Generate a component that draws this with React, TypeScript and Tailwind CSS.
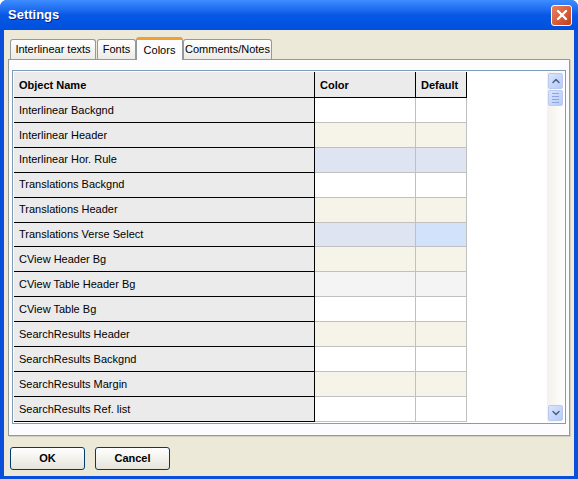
import { X, ChevronUp, ChevronDown } from "lucide-react";

// Filas de la tabla de colores
interface FilaColor {
  nombre: string;
  color: string;
  defecto: string;
}

const filas: FilaColor[] = [
  { nombre: "Interlinear Backgnd", color: "bg-white", defecto: "bg-white" },
  { nombre: "Interlinear Header", color: "bg-[#F6F3E8]", defecto: "bg-[#F6F3E8]" },
  { nombre: "Interlinear Hor. Rule", color: "bg-[#DFE4F3]", defecto: "bg-[#DFE4F3]" },
  { nombre: "Translations Backgnd", color: "bg-white", defecto: "bg-white" },
  { nombre: "Translations Header", color: "bg-[#F6F3E8]", defecto: "bg-[#F6F3E8]" },
  { nombre: "Translations Verse Select", color: "bg-[#DFE4F3]", defecto: "bg-[#D3E2FB]" },
  { nombre: "CView Header Bg", color: "bg-[#F6F3E8]", defecto: "bg-[#F6F3E8]" },
  { nombre: "CView Table Header Bg", color: "bg-[#F4F4F4]", defecto: "bg-[#F4F4F4]" },
  { nombre: "CView Table Bg", color: "bg-white", defecto: "bg-white" },
  { nombre: "SearchResults Header", color: "bg-[#F6F3E8]", defecto: "bg-[#F6F3E8]" },
  { nombre: "SearchResults Backgnd", color: "bg-white", defecto: "bg-white" },
  { nombre: "SearchResults Margin", color: "bg-[#F6F3E8]", defecto: "bg-[#F6F3E8]" },
  { nombre: "SearchResults Ref. list", color: "bg-white", defecto: "bg-white" },
];

function Pestana({ texto, ancho, activa }: { texto: string; ancho: string; activa?: boolean }) {
  if (activa) {
    return (
      <div
        className={`${ancho} h-[23px] -mb-[1px] relative z-10 flex items-center justify-center rounded-t-[3px] border-x border-[#919B9C] bg-[#FCFCFE] border-t-[3px] border-t-[#F0A030] text-[11px] text-black`}
      >
        {texto}
      </div>
    );
  }
  return (
    <div
      className={`${ancho} h-[20px] flex items-center justify-center rounded-t-[3px] border border-b-0 border-[#919B9C] bg-gradient-to-b from-white to-[#ECEBE5] text-[11px] text-black`}
    >
      {texto}
    </div>
  );
}

function BotonScroll({ children }: { children: React.ReactNode }) {
  return (
    <div className="w-[15px] h-[16px] rounded-[2px] border border-[#B9CBF3] bg-gradient-to-br from-[#D9E5FD] to-[#B7CBF8] flex items-center justify-center text-[#4D6185]">
      {children}
    </div>
  );
}

export default function App() {
  return (
    <div
      className="w-[578px] h-[479px] flex flex-col bg-[#0A4FDB] rounded-t-[7px] overflow-hidden"
      style={{ fontFamily: '"Liberation Sans", Arial, sans-serif' }}
    >
      {/* Barra de título */}
      <div className="h-[30px] flex items-center justify-between pl-[8px] pr-[6px] bg-gradient-to-b from-[#3E8DFF] via-[#0858E6] to-[#0050DD]">
        <span className="text-white font-bold text-[13px] [text-shadow:1px_1px_0_#0A1E8C]">Settings</span>
        <div className="w-[21px] h-[21px] rounded-[3px] border border-white bg-gradient-to-br from-[#E8815E] to-[#C83A15] flex items-center justify-center">
          <X size={16} strokeWidth={3.5} className="text-white" />
        </div>
      </div>

      {/* Área cliente */}
      <div className="flex-1 mx-[4px] mb-[3px] bg-[#ECE9D8] flex flex-col px-[4px] pt-[7px]">
        {/* Pestañas */}
        <div className="h-[22px] flex items-end pl-[2px]">
          <Pestana texto="Interlinear texts" ancho="w-[86px]" />
          <div className="w-[1px]" />
          <Pestana texto="Fonts" ancho="w-[39px]" />
          <Pestana texto="Colors" ancho="w-[47px]" activa />
          <Pestana texto="Comments/Notes" ancho="w-[89px]" />
        </div>

        {/* Panel */}
        <div className="h-[377px] border border-[#919B9C] bg-[#FCFCFE] pt-[10px] px-[3px] [box-shadow:1px_1px_0_#D0CEBF]">
          <div className="h-[354px] border border-[#7F9DB9] bg-white flex p-[1px]">
            {/* Tabla */}
            <div className="flex-1 flex flex-col text-[11px] text-black">
              <div className="h-[26px] flex font-bold">
                <div className="w-[301px] bg-[#EBEBEB] border-r border-b border-black flex items-center pl-[5px] pt-[1px]">
                  Object Name
                </div>
                <div className="w-[101px] bg-[#EBEBEB] border-r border-b border-black flex items-center pl-[5px] pt-[1px]">
                  Color
                </div>
                <div className="w-[51px] bg-[#EBEBEB] border-r border-b border-black flex items-center pl-[5px] pt-[1px]">
                  Default
                </div>
              </div>
              {filas.map((f) => (
                <div key={f.nombre} className="h-[25px] flex">
                  <div className="w-[301px] border-r border-b border-black bg-[#EBEBEB] flex items-center pl-[5px]">
                    {f.nombre}
                  </div>
                  <div className={`w-[101px] border-r border-b border-[#C0C0C0] ${f.color}`} />
                  <div className={`w-[51px] border-r border-b border-[#C0C0C0] ${f.defecto}`} />
                </div>
              ))}
            </div>

            {/* Barra de desplazamiento */}
            <div className="w-[17px] flex flex-col items-center justify-between py-[1px] bg-gradient-to-r from-[#F3F1EC] to-[#FEFEFB]">
              <div className="flex flex-col items-center gap-[1px]">
                <BotonScroll>
                  <ChevronUp size={12} strokeWidth={3} />
                </BotonScroll>
                <BotonScroll>
                  <div className="flex flex-col gap-[2px]">
                    <div className="w-[7px] h-[1px] bg-[#8EA5E0]" />
                    <div className="w-[7px] h-[1px] bg-[#8EA5E0]" />
                    <div className="w-[7px] h-[1px] bg-[#8EA5E0]" />
                    <div className="w-[7px] h-[1px] bg-[#8EA5E0]" />
                  </div>
                </BotonScroll>
              </div>
              <BotonScroll>
                <ChevronDown size={12} strokeWidth={3} />
              </BotonScroll>
            </div>
          </div>
        </div>

        {/* Botones */}
        <div className="mt-[11px] flex gap-[10px] pl-[2px]">
          <button className="w-[75px] h-[23px] rounded-[3px] border border-[#003C74] bg-gradient-to-b from-white to-[#E6E4DA] text-[11px] font-bold text-black">
            OK
          </button>
          <button className="w-[75px] h-[23px] rounded-[3px] border border-[#003C74] bg-gradient-to-b from-white to-[#E6E4DA] text-[11px] font-bold text-black">
            Cancel
          </button>
        </div>
      </div>
    </div>
  );
}
